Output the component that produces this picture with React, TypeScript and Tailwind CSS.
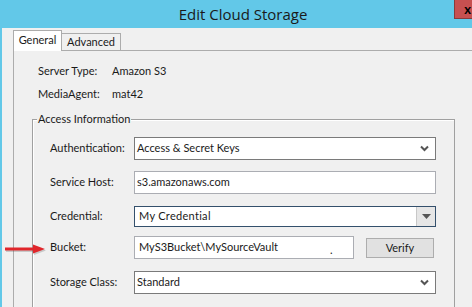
import React from "react";

const Chevron = () => (
  <svg width="9" height="7" viewBox="0 0 9 7" className="shrink-0">
    <polyline points="1,1.5 4.5,5 8,1.5" fill="none" stroke="#555" strokeWidth="2" />
  </svg>
);

export default function App() {
  const font = { fontFamily: 'Lato, "Open Sans", sans-serif' };
  return (
    <div className="w-[472px] h-[307px] overflow-hidden bg-[#62c8e8] flex flex-col relative text-[11px] text-[#1a1a1a]" style={font}>
      {/* title bar */}
      <div className="h-[28px] shrink-0 flex items-center justify-center relative">
        <span className="text-[15px] text-[#1a1a1a] leading-none pl-[14px]" style={{ fontFamily: '"Open Sans", sans-serif' }}>Edit Cloud Storage</span>
        <div className="absolute top-0 right-0 w-[18px] h-[19px] bg-[#c75050] border-l border-b border-[#8a3a3a] flex items-center justify-end pr-[1px]">
          <span className="text-[13px] font-bold text-black leading-none">x</span>
        </div>
      </div>
      {/* body */}
      <div className="flex-1 ml-[2px] bg-[#f0f0f0] pl-[11px] pt-[2px] flex flex-col">
        {/* tabs */}
        <div className="flex items-end h-[21px] relative z-10">
          <div className="w-[49px] h-[21px] bg-white border border-b-0 border-[#acacac] flex items-center justify-center pb-[1px]">
            General
          </div>
          <div className="w-[59px] h-[18px] bg-[#f0f0f0] border border-l-0 border-[#acacac] flex items-center justify-center pt-[1px]">
            Advanced
          </div>
        </div>
        {/* panel */}
        <div className="flex-1 -mt-[1px] border-l border-t border-[#acacac] bg-[#f0f0f0] pt-[9px] pl-[24px] flex flex-col">
          <div className="h-[23px] flex items-center">
            <span className="w-[74px]">Server Type:</span>
            <span>Amazon S3</span>
          </div>
          <div className="h-[23px] flex items-center">
            <span className="w-[74px]">MediaAgent:</span>
            <span>mat42</span>
          </div>
          {/* group box */}
          <div className="mt-[13px] ml-[-6px] w-[423px] flex-1 relative border border-b-0 border-[#a0a0a0] shadow-[inset_1px_1px_0_#ffffff] pt-[17px] pl-[17px] flex flex-col">
            <span className="absolute -top-[9px] left-[4px] bg-[#f0f0f0] px-[1px] leading-[16px]">Access Information</span>
            {/* Authentication */}
            <div className="h-[23px] flex items-center">
              <span className="w-[84px]">Authentication:</span>
              <div className="w-[302px] h-[23px] bg-white border border-[#7a7a7a] flex items-center pl-[2px] pr-[6px] justify-between">
                <span>Access &amp; Secret Keys</span>
                <Chevron />
              </div>
            </div>
            {/* Service Host */}
            <div className="h-[23px] mt-[11px] flex items-center">
              <span className="w-[84px]">Service Host:</span>
              <div className="w-[302px] h-[23px] bg-white border border-[#abadb3] flex items-center pl-[2px]">
                <span>s3.amazonaws.com</span>
              </div>
            </div>
            {/* Credential */}
            <div className="h-[23px] mt-[11px] flex items-center">
              <span className="w-[84px]">Credential:</span>
              <div className="w-[302px] h-[21px] bg-white border border-[#34506c] flex items-center pl-[4px] justify-between">
                <span className="tracking-[0.3px]">My Credential</span>
                <div className="w-[19px] h-[19px] bg-[#e6e6e6] border-l border-[#c8c8c8] flex items-center justify-center">
                  <svg width="9" height="5" viewBox="0 0 9 5">
                    <polygon points="0,0 9,0 4.5,5" fill="#555" />
                  </svg>
                </div>
              </div>
            </div>
            {/* Bucket */}
            <div className="h-[23px] mt-[8px] flex items-center">
              <span className="w-[84px]">Bucket:</span>
              <div className="w-[220px] h-[23px] bg-white border border-[#abadb3] flex items-center pl-[4px] relative">
                <span>MyS3Bucket\MySourceVault</span>
                <span className="absolute left-[195px] top-[5px]">.</span>
              </div>
              <button className="ml-[12px] w-[68px] h-[20px] bg-[#e1e1e1] border border-[#adadad] flex items-center justify-center leading-none">
                Verify
              </button>
            </div>
            {/* Storage Class */}
            <div className="h-[23px] mt-[12px] flex items-center">
              <span className="w-[84px]">Storage Class:</span>
              <div className="w-[302px] h-[23px] bg-white border border-[#7a7a7a] flex items-center pl-[2px] pr-[6px] justify-between">
                <span>Standard</span>
                <Chevron />
              </div>
            </div>
          </div>
        </div>
      </div>
      {/* red arrow annotation */}
      <svg className="absolute left-[3px] top-[241px]" width="48" height="18" viewBox="0 0 48 18">
        <g transform="translate(1,1.5)" opacity="0.25">
          <line x1="2" y1="8" x2="32" y2="8" stroke="#555" strokeWidth="3" />
          <polygon points="30,3.5 42,8 30,12.5" fill="#555" />
        </g>
        <line x1="2" y1="8" x2="32" y2="8" stroke="#e0262b" strokeWidth="3" />
        <polygon points="30,3.5 42,8 30,12.5" fill="#e0262b" />
      </svg>
    </div>
  );
}
